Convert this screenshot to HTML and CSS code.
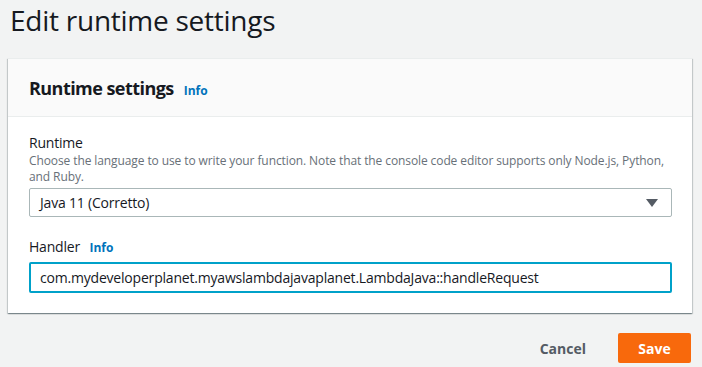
FILE: index.html
```html
<!DOCTYPE html>
<html lang="en">
<head>
    <meta charset="UTF-8">
    <meta name="viewport" content="width=device-width, initial-scale=1.0">
    <title>Edit runtime settings</title>
    <link rel="stylesheet" href="styles.css">
</head>
<body>
    <div class="page">
        <h1 class="page-title">Edit runtime settings</h1>

        <div class="container">
            <div class="container-header">
                <h2 class="container-title">Runtime settings</h2>
                <a class="info-link" href="#">Info</a>
            </div>

            <div class="container-body">
                <div class="form-field">
                    <div class="field-label">Runtime</div>
                    <div class="field-description">Choose the language to use to write your function. Note that the console code editor supports only Node.js, Python, and Ruby.</div>
                    <div class="select">
                        <span class="select-value">Java 11 (Corretto)</span>
                        <svg class="select-caret" width="12" height="8" viewBox="0 0 12 8">
                            <path d="M0 0 H12 L6 8 Z" fill="#545b64"/>
                        </svg>
                    </div>
                </div>

                <div class="form-field handler-field">
                    <div class="field-label">Handler <a class="info-link" href="#">Info</a></div>
                    <input class="text-input" type="text" value="com.mydeveloperplanet.myawslambdajavaplanet.LambdaJava::handleRequest">
                </div>
            </div>
        </div>

        <div class="form-actions">
            <button class="btn btn-link">Cancel</button>
            <button class="btn btn-primary">Save</button>
        </div>
    </div>
</body>
</html>
```

FILE: styles.css
```css
/* Base */
* {
    margin: 0;
    padding: 0;
    box-sizing: border-box;
}

body {
    font-family: 'Open Sans', 'Noto Sans', sans-serif;
    background: #f2f3f3;
    color: #16191f;
    letter-spacing: -0.2px;
    overflow: hidden;
}

.page {
    padding: 0 10px 0 8px;
}

.page-title {
    font-size: 28px;
    font-weight: 400;
    line-height: 36px;
    letter-spacing: -0.25px;
    padding: 2px 0 0 2px;
    margin-bottom: 20px;
}

/* Container card */
.container {
    background: #fff;
    border-top: 1px solid #eaeded;
    box-shadow: 0 1px 1px 0 rgba(0, 28, 36, 0.3),
                1px 1px 1px 0 rgba(0, 28, 36, 0.15),
                -1px 1px 1px 0 rgba(0, 28, 36, 0.15);
}

.container-header {
    display: flex;
    align-items: baseline;
    gap: 10px;
    background: #fafafa;
    border-bottom: 1px solid #eaeded;
    padding: 18px 20px 17px 21px;
}

.container-title {
    font-size: 18px;
    font-weight: 700;
    line-height: 22px;
    letter-spacing: -0.55px;
}

.info-link {
    color: #0073bb;
    font-size: 12px;
    font-weight: 700;
    letter-spacing: 0;
    text-decoration: none;
}

.container-body {
    padding: 16px 20px 20px 21px;
}

/* Form fields */
.field-label {
    font-size: 14px;
    line-height: 20px;
}

.field-label .info-link {
    margin-left: 6px;
}

.field-description {
    color: #687078;
    font-size: 12px;
    line-height: 16px;
    letter-spacing: -0.1px;
    padding-right: 6px;
}

.select {
    display: flex;
    align-items: center;
    justify-content: space-between;
    height: 29px;
    margin-top: 3px;
    padding: 0 13px 0 10px;
    border: 1px solid #aab7b8;
    border-radius: 2px;
    font-size: 14px;
}

.handler-field {
    margin-top: 20px;
}

.text-input {
    display: block;
    width: 100%;
    height: 31px;
    margin-top: 4px;
    padding: 0 9px;
    border: 2px solid #00a1c9;
    border-radius: 2px;
    font-family: inherit;
    font-size: 14px;
    letter-spacing: -0.2px;
    color: #16191f;
    outline: none;
}

/* Actions */
.form-actions {
    display: flex;
    justify-content: flex-end;
    align-items: center;
    gap: 12px;
    margin-top: 20px;
    padding-right: 1px;
}

.btn {
    font-family: inherit;
    font-size: 14px;
    font-weight: 700;
    height: 30px;
    border: none;
    border-radius: 2px;
    background: none;
}

.btn-link {
    color: #545b64;
    padding: 0 20px;
}

.btn-primary {
    width: 73px;
    background: #f8690c;
    color: #fff;
}
```
